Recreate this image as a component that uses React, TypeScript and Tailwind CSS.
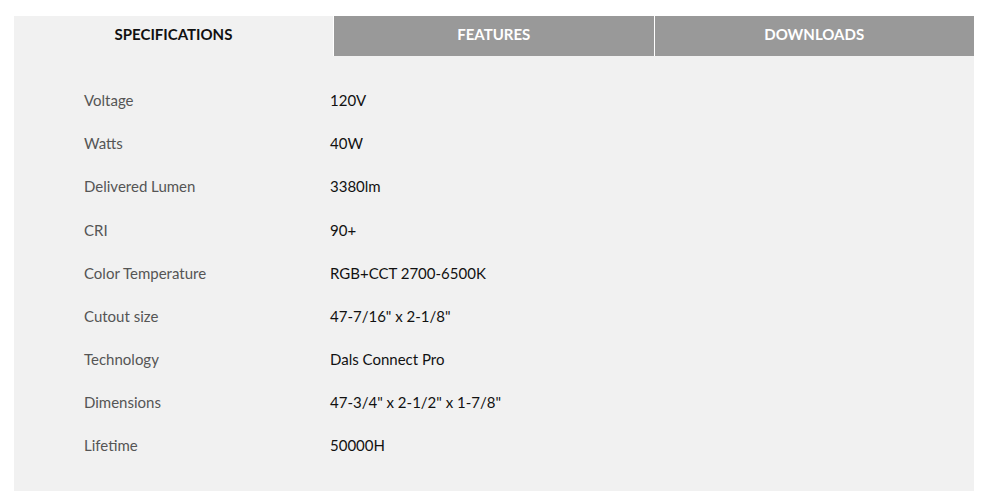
const specs: [string, string][] = [
  ["Voltage", "120V"],
  ["Watts", "40W"],
  ["Delivered Lumen", "3380lm"],
  ["CRI", "90+"],
  ["Color Temperature", "RGB+CCT 2700-6500K"],
  ["Cutout size", '47-7/16" x 2-1/8"'],
  ["Technology", "Dals Connect Pro"],
  ["Dimensions", '47-3/4" x 2-1/2" x 1-7/8"'],
  ["Lifetime", "50000H"],
];

const tabs = ["SPECIFICATIONS", "FEATURES", "DOWNLOADS"];

export default function App() {
  const active = 0;

  return (
    <div className="w-[1000px] h-[504px] bg-white pt-4 pl-[14px] font-['Lato',sans-serif]">
      <div className="w-[960px] h-[475px] bg-[#f1f1f1]">
        <div className="flex h-10">
          {tabs.map((tab, i) => (
            <div
              key={tab}
              className={
                i === active
                  ? "w-[319px] flex items-center justify-center pb-[3px] text-[15px] font-bold text-[#111111]"
                  : "flex-1 flex items-center justify-center pb-[3px] text-[15px] font-bold text-white bg-[#999999] border-l border-white"
              }
            >
              {tab}
            </div>
          ))}
        </div>

        <div className="pt-[23px] pl-[70px]">
          {specs.map(([label, value]) => (
            <div key={label} className="grid grid-cols-[246px_1fr] h-[43.1px] items-center text-[15px]">
              <span className="text-[#555555]">{label}</span>
              <span className="text-[#111111]">{value}</span>
            </div>
          ))}
        </div>
      </div>
    </div>
  );
}
